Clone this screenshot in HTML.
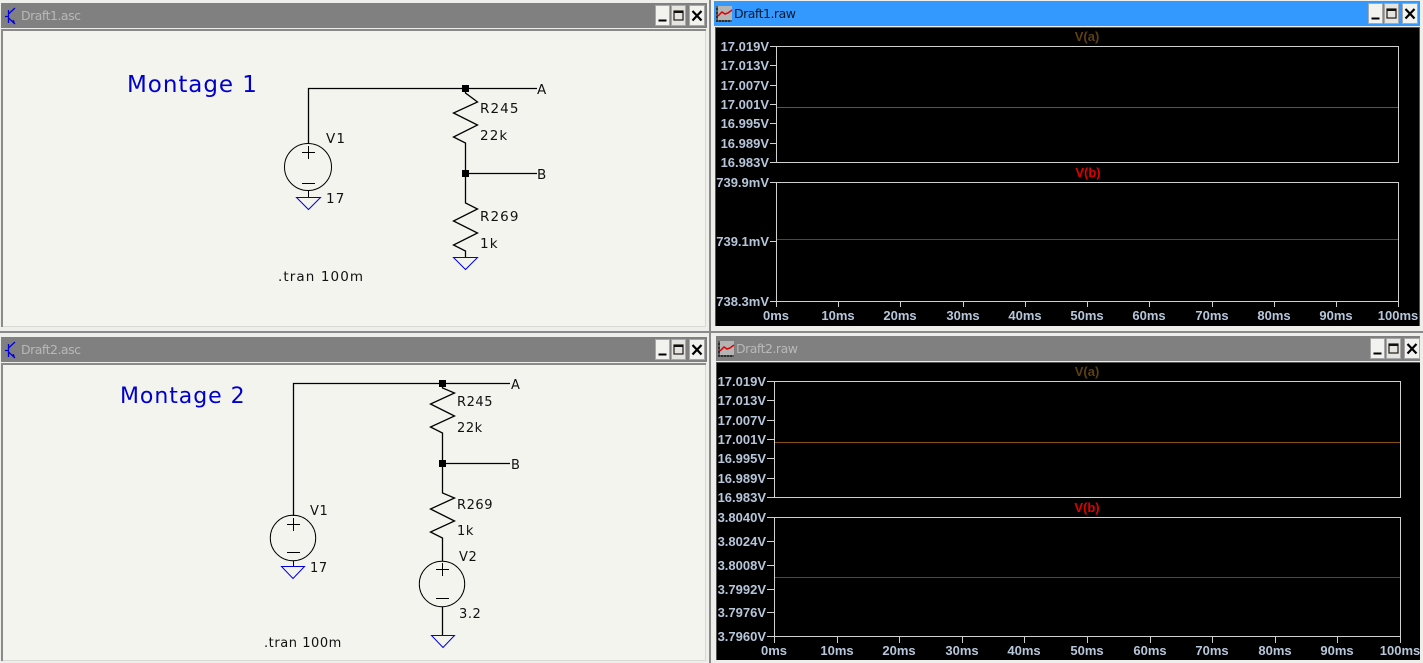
<!DOCTYPE html>
<html><head><meta charset="utf-8"><style>
html,body{margin:0;padding:0;background:#e8e8e4;width:1423px;height:663px;overflow:hidden}
svg{display:block}
.s{font:13.5px "DejaVu Sans",sans-serif;letter-spacing:1.1px;fill:#111}
.s2{font:13px "DejaVu Sans",sans-serif;letter-spacing:.55px;fill:#111}
.m{font:23px "DejaVu Sans",sans-serif;letter-spacing:.95px;fill:#0000cc}
.m2{font:22px "DejaVu Sans",sans-serif;letter-spacing:.95px;fill:#0000cc}
.t{font:12.5px "DejaVu Sans",sans-serif;letter-spacing:-.5px}
.l{font:bold 13px "Liberation Sans",sans-serif;fill:#b6c6da;text-anchor:end}
.x{font:bold 13px "Liberation Sans",sans-serif;fill:#b6c6da;text-anchor:middle}
.h{font:bold 13px "Liberation Sans",sans-serif;text-anchor:middle}
.w{fill:none;stroke:#000;stroke-width:1.3}
.g{fill:none;stroke:#0000e0;stroke-width:1}
.f{fill:none;stroke:#d0d0d0;stroke-width:1}
</style></head><body>
<svg width="1423" height="663" viewBox="0 0 1423 663" xmlns="http://www.w3.org/2000/svg">
<defs>
<g id="btns">
<rect x="0" y="0" width="14" height="20" fill="#f2f2ee" stroke="#a8a8a8"/>
<rect x="16" y="0" width="14" height="20" fill="#e4e4e0" stroke="#a8a8a8"/>
<rect x="34" y="0" width="15" height="20" fill="#f2f2ee" stroke="#a8a8a8"/>
<path d="M3 15h8" stroke="#000" stroke-width="2"/>
<rect x="18.500" y="5.500" width="9" height="9" fill="none" stroke="#221a10" stroke-width="1.200"/>
<path d="M18.500 6.500h9" stroke="#111" stroke-width="2"/>
<path d="M37 5.500l9 9.500M46 5.500l-9 9.500" stroke="#000" stroke-width="2.200" fill="none"/>
</g>
<g id="trans">
<path d="M0 8.500h3M3.500 2v13M3.500 6L10 0M3.500 10L10 16" stroke="#0000e0" stroke-width="1.300" fill="none"/>
<path d="M6 13l4 3-1-4z" fill="#0000e0"/>
</g>
<g id="plot">
<rect x="0" y="0" width="16" height="16" fill="#b4b4b4"/>
<path d="M1 0v16M0 3h2M0 7h2M0 11h2M0 15h16M4 14v2M7 14v2M10 14v2M13 14v2" stroke="#000" stroke-width="1" fill="none"/>
<path d="M2 10l4-4 3 2 3-1 4-3" stroke="#e00000" stroke-width="1.500" fill="none"/>
</g>
</defs>

<!-- frame separators -->
<rect x="0" y="0" width="1423" height="663" fill="#eeeeea"/>
<rect x="709" y="0" width="2" height="663" fill="#8a8a8a"/>
<rect x="0" y="331" width="1423" height="2" fill="#8a8a8a"/>

<!-- Window 1 -->
<rect x="1" y="3" width="706" height="25" fill="#808080"/>
<rect x="1" y="29" width="705" height="298" fill="#8a8a8a"/>
<rect x="3" y="31" width="703" height="296" fill="#d8d8d4"/>
<rect x="3" y="31" width="702" height="295" fill="#f4f4ef"/>
<use href="#trans" x="5" y="8"/>
<text class="t" x="21" y="20" fill="#b8b8b8">Draft1.asc</text>
<use href="#btns" x="655.500" y="5.500"/>

<!-- Window 2 -->
<rect x="1" y="337" width="706" height="25" fill="#808080"/>
<rect x="1" y="363" width="705" height="298" fill="#8a8a8a"/>
<rect x="3" y="365" width="703" height="296" fill="#d8d8d4"/>
<rect x="3" y="365" width="702" height="295" fill="#f4f4ef"/>
<use href="#trans" x="5" y="342"/>
<text class="t" x="21" y="354" fill="#b8b8b8">Draft2.asc</text>
<use href="#btns" x="655.500" y="339.500"/>

<!-- Window 3 -->
<rect x="714" y="1" width="706" height="25" fill="#3399ff"/>
<rect x="715" y="27" width="705" height="299" fill="#555"/>
<rect x="716" y="28" width="703" height="298" fill="#000"/>
<use href="#plot" x="716" y="6"/>
<text class="t" x="734" y="18" fill="#0a1a30">Draft1.raw</text>
<use href="#btns" x="1368.500" y="3.500"/>

<!-- Window 4 -->
<rect x="716" y="336" width="704" height="25" fill="#808080"/>
<rect x="716" y="362" width="704" height="298" fill="#555"/>
<rect x="717" y="363" width="703" height="297" fill="#000"/>
<use href="#plot" x="718" y="341"/>
<text class="t" x="736" y="353" fill="#b8b8b8">Draft2.raw</text>
<use href="#btns" x="1370.500" y="338.500"/>

<!-- Schematic 1 -->
<text class="m" x="127" y="92">Montage 1</text>
<path class="w" d="M308.500 143V88.500H537"/>
<circle cx="308" cy="167" r="23.500" fill="none" stroke="#000" stroke-width="1"/>
<path d="M302 152.500h13M308.500 146v13M302 183.500h13M308.500 191v6" stroke="#000" stroke-width="1" fill="none"/>
<path class="g" d="M296.500 197.500h24l-12 12z"/>
<rect x="462" y="85" width="7" height="7" fill="#000"/>
<path class="w" d="M465.500 92v1l12 9-24 11 24 12-24 12 12 6v60l12 6-24 12 24 12-24 12 12 6v6M465.500 173.500H537"/>
<rect x="462" y="170" width="7" height="7" fill="#000"/>
<path class="g" d="M453.500 257.500h24l-12 12z"/>
<text class="s" x="537" y="94">A</text>
<text class="s" x="537" y="179">B</text>
<text class="s" x="480" y="113">R245</text>
<text class="s" x="480" y="140">22k</text>
<text class="s" x="480" y="221">R269</text>
<text class="s" x="480" y="248">1k</text>
<text class="s" x="326" y="143">V1</text>
<text class="s" x="326" y="203">17</text>
<text class="s" x="278" y="281">.tran 100m</text>

<!-- Schematic 2 -->
<text class="m2" x="120" y="403">Montage 2</text>
<path class="w" d="M293.500 516V383.500H510"/>
<circle cx="293" cy="538" r="22.700" fill="none" stroke="#000" stroke-width="1"/>
<path d="M287 524.500h13M293.500 518v13M287 552.500h13M293.500 561v5" stroke="#000" stroke-width="1" fill="none"/>
<path class="g" d="M281.500 566.500h23l-11.500 12z"/>
<rect x="439" y="380" width="7" height="7" fill="#000"/>
<path class="w" d="M442.500 387v1l12 5-24 11 24 12-24 11 12 6v60l12 5-24 11 24 12-24 11 12 6v23"/>
<path class="w" d="M442.500 463.500H510"/>
<rect x="439" y="460" width="7" height="7" fill="#000"/>
<circle cx="442" cy="584" r="22.700" fill="none" stroke="#000" stroke-width="1"/>
<path d="M436 569.500h13M442.500 563v13M436 598.500h13" stroke="#000" stroke-width="1" fill="none"/>
<path class="w" d="M442.500 607v28"/>
<path class="g" d="M431.500 635.500h23l-11.500 12z"/>
<text class="s2" x="511" y="389">A</text>
<text class="s2" x="511" y="469">B</text>
<text class="s2" x="457" y="406">R245</text>
<text class="s2" x="457" y="432">22k</text>
<text class="s2" x="457" y="509">R269</text>
<text class="s2" x="457" y="535">1k</text>
<text class="s2" x="310" y="515">V1</text>
<text class="s2" x="310" y="572">17</text>
<text class="s2" x="459" y="561">V2</text>
<text class="s2" x="459" y="618">3.2</text>
<text class="s2" x="264" y="647">.tran 100m</text>

<!-- Plot 1 -->
<rect class="f" x="776.500" y="46.500" width="622" height="116"/>
<rect class="f" x="776.500" y="182.500" width="622" height="119"/>
<path class="f" d="M770 46.500h6M770 65.500h6M770 85.500h6M770 104.500h6M770 123.500h6M770 143.500h6M770 162.500h6M770 182.500h6M770 241.500h6M770 301.500h6"/>
<path class="f" d="M776.500 302v5M838.500 302v5M900.500 302v5M963.500 302v5M1025.500 302v5M1087.500 302v5M1149.500 302v5M1212.500 302v5M1274.500 302v5M1336.500 302v5M1398.500 302v5"/>
<path d="M777 107.500h621" stroke="#7a5012" stroke-width="1"/>
<path d="M777 239.500h621" stroke="#d01010" stroke-width="1"/>
<text class="h" x="1087" y="41" fill="#5e3f10">V(a)</text>
<text class="h" x="1088" y="177" fill="#e00000">V(b)</text>
<g class="l">
<text x="769" y="51">17.019V</text><text x="769" y="70">17.013V</text><text x="769" y="90">17.007V</text><text x="769" y="109">17.001V</text><text x="769" y="128">16.995V</text><text x="769" y="148">16.989V</text><text x="769" y="167">16.983V</text>
<text x="769" y="187">739.9mV</text><text x="769" y="246">739.1mV</text><text x="769" y="306">738.3mV</text>
</g>
<g class="x">
<text x="776" y="320">0ms</text><text x="838" y="320">10ms</text><text x="900" y="320">20ms</text><text x="963" y="320">30ms</text><text x="1025" y="320">40ms</text><text x="1087" y="320">50ms</text><text x="1149" y="320">60ms</text><text x="1212" y="320">70ms</text><text x="1274" y="320">80ms</text><text x="1336" y="320">90ms</text><text x="1398" y="320">100ms</text>
</g>

<!-- Plot 2 -->
<rect class="f" x="774.500" y="381.500" width="626" height="116"/>
<rect class="f" x="774.500" y="517.500" width="626" height="119"/>
<path class="f" d="M767 381.500h7M767 400.500h7M767 420.500h7M767 439.500h7M767 458.500h7M767 478.500h7M767 497.500h7M767 517.500h7M767 541.500h7M767 565.500h7M767 589.500h7M767 612.500h7M767 636.500h7"/>
<path class="f" d="M774.500 637v6M837.500 637v6M899.500 637v6M962.500 637v6M1024.500 637v6M1087.500 637v6M1150.500 637v6M1212.500 637v6M1275.500 637v6M1337.500 637v6M1400.500 637v6"/>
<path d="M775 442.500h625" stroke="#8a5010" stroke-width="1"/>
<path d="M775 577.500h625" stroke="#d01010" stroke-width="1"/>
<text class="h" x="1087" y="376" fill="#5e3f10">V(a)</text>
<text class="h" x="1087" y="512" fill="#e00000">V(b)</text>
<g class="l">
<text x="766" y="386">17.019V</text><text x="766" y="405">17.013V</text><text x="766" y="425">17.007V</text><text x="766" y="444">17.001V</text><text x="766" y="463">16.995V</text><text x="766" y="483">16.989V</text><text x="766" y="502">16.983V</text>
<text x="766" y="522">3.8040V</text><text x="766" y="546">3.8024V</text><text x="766" y="570">3.8008V</text><text x="766" y="594">3.7992V</text><text x="766" y="617">3.7976V</text><text x="766" y="641">3.7960V</text>
</g>
<g class="x">
<text x="774" y="655">0ms</text><text x="837" y="655">10ms</text><text x="899" y="655">20ms</text><text x="962" y="655">30ms</text><text x="1024" y="655">40ms</text><text x="1087" y="655">50ms</text><text x="1150" y="655">60ms</text><text x="1212" y="655">70ms</text><text x="1275" y="655">80ms</text><text x="1337" y="655">90ms</text><text x="1400" y="655">100ms</text>
</g>
</svg>
</body></html>
